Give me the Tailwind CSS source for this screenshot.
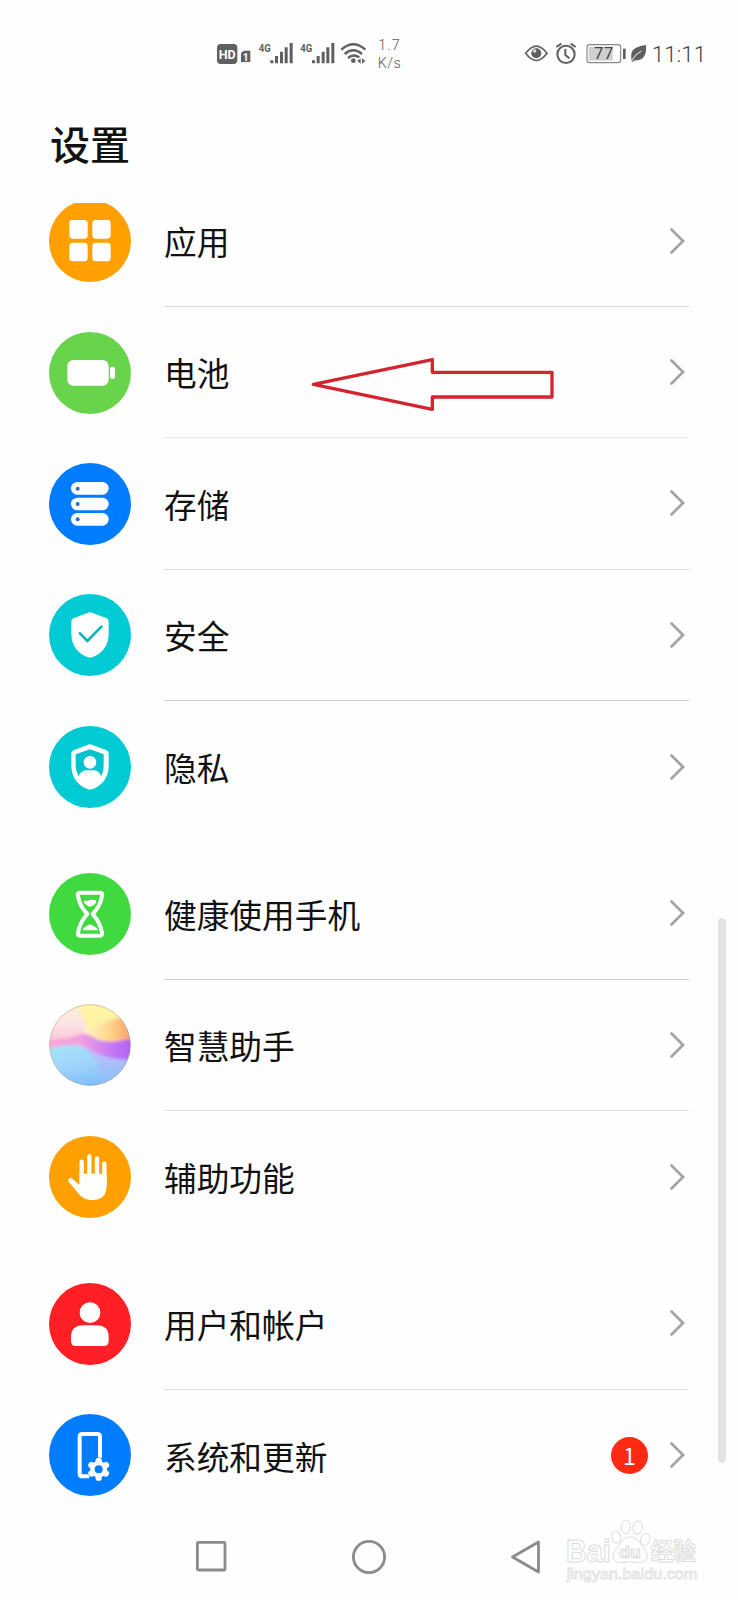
<!DOCTYPE html>
<html lang="zh-CN">
<head>
<meta charset="utf-8">
<title>设置</title>
<script src="https://cdn.jsdelivr.net/npm/@tailwindcss/browser@4"></script>
</head>
<body class="bg-[#fefefe]">
<svg class="hidden">
  <symbol id="chev" viewBox="0 0 16 28"><path d="M2.500 2.500 14 14 2.500 25.500" fill="none" stroke="#a3a3a3" stroke-width="2.700" stroke-linecap="round"/></symbol>
</svg>
<div class="relative flex h-[1600px] w-[738px] flex-col overflow-hidden bg-[#fefefe] font-['Noto_Sans_CJK_SC',sans-serif] text-[#111]">

  <!-- status bar -->
  <header class="flex h-[85px] shrink-0 items-end justify-between pl-[200px]">
    <svg class="h-[60px] w-[220px]" viewBox="0 0 660 180" fill="#5f5f5f">
      <rect x="51" y="57" width="61" height="60" rx="11"/>
      <text x="56" y="101" font-family="Roboto" font-weight="700" font-size="39" textLength="51" lengthAdjust="spacingAndGlyphs" fill="#fff">HD</text>
      <path d="M123 111V84l8-7h20v34z"/>
      <text x="128" y="107" font-family="Roboto" font-weight="700" font-size="31" fill="#fff">1</text>
      <text x="176" y="81" font-family="Roboto" font-weight="700" font-size="35" textLength="36" lengthAdjust="spacingAndGlyphs">4G</text>
      <path d="M211 106h9v9h-9zM225 93h9v22h-9zM240 80h9v35h-9zM254 67h9v48h-9zM269 54h9v61h-9z"/>
      <text x="301" y="81" font-family="Roboto" font-weight="700" font-size="35" textLength="36" lengthAdjust="spacingAndGlyphs">4G</text>
      <path d="M336 106h9v9h-9zM350 93h9v22h-9zM365 80h9v35h-9zM379 67h9v48h-9zM394 54h9v61h-9z"/>
      <g fill="none" stroke="#5f5f5f" stroke-width="7"><path d="M424 74Q460 42 496 74M434 87Q460 65 486 87M444 99Q460 85 478 97"/></g>
      <circle cx="460" cy="107" r="7"/><path d="M482 100v16l-10-8zM486 100v16l10-8z"/>
      <g font-family="Roboto" font-size="43" font-weight="300"><text x="535" y="74" textLength="64" fill="#5a5a5a">1.7</text><text x="533" y="129" textLength="69" fill="#5a5a5a">K/s</text></g>
    </svg>
    <svg class="h-[60px] w-[228px]" viewBox="0 0 684 180" fill="#5f5f5f">
      <path d="M47 85Q79 42 111 85Q79 128 47 85z" fill="none" stroke="#5f5f5f" stroke-width="5"/>
      <circle cx="79" cy="85" r="15"/><circle cx="74" cy="78" r="5" fill="#ddd"/>
      <circle cx="168" cy="88" r="26" fill="none" stroke="#5f5f5f" stroke-width="6"/>
      <path d="M166 72v18l12 10M139 66l15-10M197 66l-15-10" fill="none" stroke="#5f5f5f" stroke-width="6"/>
      <rect x="231" y="59" width="101" height="54" rx="8" fill="#fff" stroke="#888" stroke-width="3.500"/>
      <rect x="236" y="65" width="72" height="42" fill="#d0d0d0"/>
      <text x="252" y="103" font-family="Roboto" font-size="50" textLength="58" fill="#444">77</text>
      <rect x="339" y="71" width="8" height="31"/>
      <path d="M408 60C411 91 399 108 376 106L366 111C359 79 367 66 408 60z"/>
      <path d="M364 109Q374 88 394 78" stroke="#fefefe" stroke-width="3" fill="none"/>
      <text x="425" y="111" font-family="Roboto" font-size="68" font-weight="300" textLength="164" fill="#444">11:11</text>
    </svg>
  </header>

  <h1 class="flex h-[116px] shrink-0 items-center pl-[50px] text-[40px] leading-none font-medium">设置</h1>

  <!-- settings list, scrolled slightly under the title -->
  <main class="mt-[2px] h-[1317px] shrink-0 overflow-hidden pr-[49px] pl-[49px]">
    <section class="-mt-[27.5px]">
      <a class="flex h-[131.35px] items-stretch gap-[33px]">
        <svg class="size-[82px] self-center" viewBox="57 270 246 246"><circle cx="180" cy="393" r="123" fill="#ffa000"/><g fill="#fff"><rect x="118" y="330" width="55" height="56" rx="10"/><rect x="187" y="330" width="55" height="56" rx="10"/><rect x="118" y="398" width="55" height="56" rx="10"/><rect x="187" y="398" width="55" height="56" rx="10"/></g></svg>
        <div class="flex flex-1 items-center justify-between border-b border-[#d9d9d9] pr-1 text-[32.7px]"><span>应用</span><svg class="h-7 w-4"><use href="#chev"/></svg></div>
      </a>
      <a class="flex h-[131.35px] items-stretch gap-[33px]">
        <svg class="size-[82px] self-center" viewBox="57 63 246 246"><circle cx="180" cy="186" r="123" fill="#67d44c"/><rect x="112" y="147" width="124" height="77" rx="18" fill="#fff"/><rect x="240" y="167" width="15" height="37" rx="7" fill="#fff"/></svg>
        <div class="flex flex-1 items-center justify-between border-b border-[#e6e6e6] pr-1 text-[32.7px]"><span>电池</span><svg class="h-7 w-4"><use href="#chev"/></svg></div>
      </a>
      <a class="flex h-[131.35px] items-stretch gap-[33px]">
        <svg class="size-[82px] self-center" viewBox="57 457 246 246"><circle cx="180" cy="580" r="123" fill="#007dff"/><g fill="#fff"><rect x="123" y="514" width="113" height="38" rx="19"/><rect x="123" y="561" width="113" height="38" rx="19"/><rect x="123" y="607" width="113" height="38" rx="19"/></g><g fill="#2f6fb5"><circle cx="143" cy="534" r="6"/><circle cx="143" cy="580" r="6"/><circle cx="143" cy="626" r="6"/></g></svg>
        <div class="flex flex-1 items-center justify-between border-b border-[#d9d9d9] pr-1 text-[32.7px]"><span>存储</span><svg class="h-7 w-4"><use href="#chev"/></svg></div>
      </a>
      <a class="flex h-[131.35px] items-stretch gap-[33px]">
        <svg class="size-[82px] self-center" viewBox="57 41 246 246"><circle cx="180" cy="164" r="123" fill="#00cbd4"/><path d="M172 98Q180 94 188 98L230 114Q236 117 236 124V160C236 200 212 220 188 230Q180 233 172 230C148 220 124 200 124 160V124Q124 117 130 114z" fill="#fff"/><path d="M150 159 172 182 214 139" fill="none" stroke="#13b3bb" stroke-width="8" stroke-linecap="round" stroke-linejoin="round"/></svg>
        <div class="flex flex-1 items-center justify-between border-b border-[#cfcfcf] pr-1 text-[32.7px]"><span>安全</span><svg class="h-7 w-4"><use href="#chev"/></svg></div>
      </a>
      <a class="flex h-[131.35px] items-stretch gap-[33px]">
        <svg class="size-[82px] self-center" viewBox="57 434 246 246"><circle cx="180" cy="557" r="123" fill="#00cbd4"/><path d="M172 491Q180 487 188 491L230 507Q236 510 236 517V553C236 593 212 613 188 623Q180 626 172 623C148 613 124 593 124 553V517Q124 510 130 507z" fill="#fff"/><path d="M180 504 221 519V553Q221 571 214 585Q208 568 192 567H168Q152 568 146 585Q137 571 137 553V519z" fill="#00c4cd"/><circle cx="180" cy="543" r="19" fill="#fff"/></svg>
        <div class="flex flex-1 items-center justify-between pr-1 text-[32.7px]"><span>隐私</span><svg class="h-7 w-4"><use href="#chev"/></svg></div>
      </a>
    </section>

    <section class="mt-4">
      <a class="flex h-[131.35px] items-stretch gap-[33px]">
        <svg class="size-[82px] self-center" viewBox="57 37 246 246"><circle cx="180" cy="160" r="123" fill="#41d940"/><path d="M150 96H210Q219 96 216 106C212 130 202 146 188 160C202 176 212 190 216 216Q218 225 210 225H150Q142 225 144 216C148 190 158 176 172 160C158 146 148 130 144 106Q141 96 150 96z" fill="none" stroke="#fff" stroke-width="12" stroke-linejoin="round"/><path d="M161 122Q166 117 172 121Q182 115 198 119Q200 127 192 132L180 139L169 133Q161 129 161 122zM157 209Q160 199 180 191Q200 199 205 209z" fill="#fff"/></svg>
        <div class="flex flex-1 items-center justify-between border-b border-[#cfcfcf] pr-1 text-[32.7px]"><span>健康使用手机</span><svg class="h-7 w-4"><use href="#chev"/></svg></div>
      </a>
      <a class="flex h-[131.35px] items-stretch gap-[33px]">
        <svg class="size-[82px] self-center" viewBox="57 432 246 246">
          <defs>
            <clipPath id="orb"><circle cx="180" cy="555" r="122"/></clipPath>
            <linearGradient id="pink" x1="0" y1="0" x2="0" y2="1"><stop offset="0" stop-color="#fdf0cf"/><stop offset=".5" stop-color="#fbe4e6"/><stop offset="1" stop-color="#ffb0cd"/></linearGradient>
            <linearGradient id="vio" x1="0" y1="0" x2="1" y2="0"><stop offset="0" stop-color="#ffa6cf"/><stop offset=".4" stop-color="#f0a0e0"/><stop offset=".7" stop-color="#c77cf5"/><stop offset="1" stop-color="#a95cf0"/></linearGradient>
            <linearGradient id="blue" x1="0" y1="0" x2=".5" y2="1"><stop offset="0" stop-color="#a5e6f8"/><stop offset=".5" stop-color="#a1d3fb"/><stop offset="1" stop-color="#78bdfb"/></linearGradient>
            <linearGradient id="lil" x1="0" y1="0" x2="0" y2="1"><stop offset="0" stop-color="#cfadfb"/><stop offset="1" stop-color="#8cc3fb"/></linearGradient>
            <linearGradient id="or" x1="0" y1="0" x2="1" y2="0"><stop offset="0" stop-color="#fff8cc"/><stop offset=".5" stop-color="#ffd48a"/><stop offset="1" stop-color="#fb9468"/></linearGradient>
            <filter id="soft" x="-10%" y="-10%" width="120%" height="120%"><feGaussianBlur stdDeviation="4"/></filter>
          </defs>
          <g clip-path="url(#orb)">
            <rect x="57" y="432" width="246" height="246" fill="#fff3a6"/>
            <g filter="url(#soft)">
              <path d="M40 420H148Q150 480 185 523L170 570H40z" fill="url(#pink)"/>
              <path d="M160 508Q200 500 233 484Q270 465 320 485V560Q240 570 180 528z" fill="url(#or)"/>
              <path d="M40 540Q115 540 150 523Q175 520 205 540Q250 552 320 532V620L180 600L40 580z" fill="url(#vio)"/>
              <path d="M40 568Q110 552 145 556Q165 560 200 580Q240 603 320 600V690H40z" fill="url(#blue)"/>
              <path d="M150 556Q175 562 200 580Q240 603 320 600V650Q255 690 200 690Q235 620 150 556z" fill="url(#lil)" opacity=".6"/>
            </g>
          </g>
          <circle cx="180" cy="555" r="121" fill="none" stroke="#a99f9f" stroke-opacity=".6" stroke-width="2.500"/>
        </svg>
        <div class="flex flex-1 items-center justify-between border-b border-[#e2e2e2] pr-1 text-[32.7px]"><span>智慧助手</span><svg class="h-7 w-4"><use href="#chev"/></svg></div>
      </a>
      <a class="flex h-[131.35px] items-stretch gap-[33px]">
        <svg class="size-[82px] self-center" viewBox="57 45 246 246"><circle cx="180" cy="168" r="123" fill="#ffa000"/><path d="M155 122V180M178 106V170M201 112V170M223 128V190" stroke="#fff" stroke-width="13" stroke-linecap="round"/><path d="M148 158H230V196C230 222 215 237 190 237C166 237 155 230 144 216L115 181C112 174 121 168 127 173L148 192z" fill="#fff"/></svg>
        <div class="flex flex-1 items-center justify-between pr-1 text-[32.7px]"><span>辅助功能</span><svg class="h-7 w-4"><use href="#chev"/></svg></div>
      </a>
    </section>

    <section class="mt-4">
      <a class="flex h-[131.35px] items-stretch gap-[33px]">
        <svg class="size-[82px] self-center" viewBox="57 488 246 246"><circle cx="180" cy="611" r="123" fill="#ff1f24"/><circle cx="180" cy="577" r="31" fill="#fff"/><path d="M123 663V650Q123 615 160 615H200Q236 615 236 650V663Q236 677 222 677H137Q123 677 123 663z" fill="#fff"/></svg>
        <div class="flex flex-1 items-center justify-between border-b border-[#e2e2e2] pr-1 text-[32.7px]"><span>用户和帐户</span><svg class="h-7 w-4"><use href="#chev"/></svg></div>
      </a>
      <a class="flex h-[131.35px] items-stretch gap-[33px]">
        <svg class="size-[82px] self-center" viewBox="57 72 246 246"><circle cx="180" cy="195" r="123" fill="#007dff"/><path d="M210 203V140Q210 132 202 132H157Q149 132 149 140V251Q149 259 157 259H178" fill="none" stroke="#fff" stroke-width="12"/><circle cx="206" cy="238" r="35" fill="#007dff"/><path d="M206 213V263M184.300 225.500L227.700 250.500M184.300 250.500L227.700 225.500" stroke="#fff" stroke-width="19" stroke-linecap="round" stroke-linejoin="round"/><circle cx="206" cy="238" r="25" fill="#fff"/><circle cx="206" cy="238" r="12" fill="#007dff"/></svg>
        <div class="flex flex-1 items-center justify-between pr-1 text-[32.7px]"><span>系统和更新</span><span class="flex items-center gap-[21px]"><b class="flex size-[37px] items-center justify-center rounded-full bg-[#ff2a14] text-[23px] font-normal text-white">1</b><svg class="h-7 w-4"><use href="#chev"/></svg></span></div>
      </a>
    </section>
  </main>

  <!-- system navigation -->
  <nav class="flex h-[80px] items-center pb-[6px] pl-[196px]">
    <svg class="h-[40px] w-[350px]" viewBox="0 0 350 40" fill="none" stroke="#8b8b8b" stroke-width="2.800"><rect x="1.400" y="5.400" width="27.600" height="27.600" rx="1"/><circle cx="173" cy="20" r="15.600"/><path d="M316.500 20 342.500 5V35z" stroke-linejoin="round"/></svg>
  </nav>

  <!-- annotation arrow -->
  <svg class="absolute top-[340px] left-[300px] h-[90px] w-[280px]" viewBox="0 0 840 270"><path d="M40 133 397 59V97H756V171H397V208z" fill="none" stroke="#d4242f" stroke-width="10" stroke-linejoin="round"/></svg>

  <!-- scrollbar -->
  <div class="absolute top-[918px] left-[718px] h-[545px] w-2 rounded-full bg-[#e3e3e3]"></div>

  <!-- watermark -->
  <svg class="absolute top-[1510px] left-[555px] h-[80px] w-[160px]" viewBox="45 330 480 240" fill="#fefefe" stroke="#dcdcdc" stroke-width="3">
    <g font-family="Liberation Sans" font-weight="700">
      <text x="78" y="486" font-size="92" textLength="134" lengthAdjust="spacingAndGlyphs">Bai</text>
      <path d="M270 411C295 411 300 435 316 450C330 468 318 489 298 488Q270 482 243 488C222 488 212 468 226 450C242 435 246 411 270 411z"/>
      <ellipse cx="229" cy="411" rx="13" ry="19" transform="rotate(-15 229 411)"/><ellipse cx="257" cy="381" rx="14" ry="20"/><ellipse cx="293" cy="383" rx="14" ry="20" transform="rotate(10 293 383)"/><ellipse cx="315" cy="419" rx="13" ry="19" transform="rotate(20 315 419)"/>
      <text x="238" y="474" font-size="48" textLength="64" lengthAdjust="spacingAndGlyphs">du</text>
      <text x="332" y="480" font-family="Noto Sans CJK SC" font-size="70" textLength="136" lengthAdjust="spacingAndGlyphs">经验</text>
      <text x="80" y="536" font-weight="400" font-size="44" stroke="#e2e2e2" stroke-width="2.500" textLength="392" lengthAdjust="spacingAndGlyphs">jingyan.baidu.com</text>
    </g>
  </svg>
</div>
</body>
</html>
